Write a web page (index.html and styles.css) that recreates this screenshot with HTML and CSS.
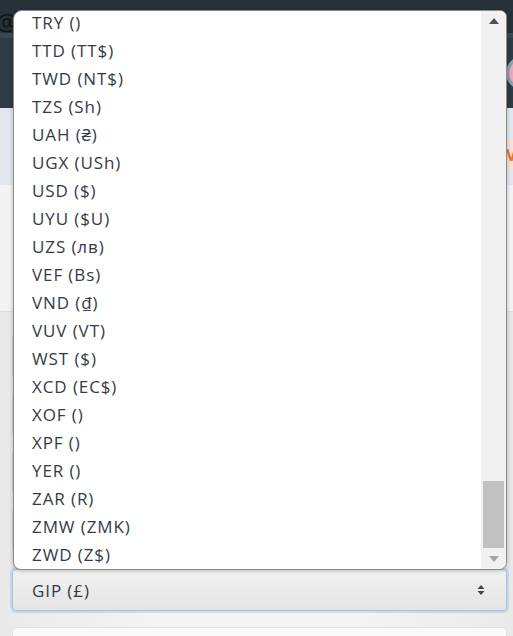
FILE: index.html
```html
<!DOCTYPE html>
<html>
<head>
<meta charset="utf-8">
<link rel="stylesheet" href="styles.css">
</head>
<body>
<div class="page">
  <header class="topbar"><span class="at">@</span></header>
  <div class="subnav"><span class="avatar"></span></div>
  <div class="hero"><span class="hero-btn">V</span></div>
  <div class="band"></div>
  <div class="form">
    <div class="field"></div>
    <div class="field"></div>
    <div class="field"></div>
    <div class="field"></div>
    <div class="select-box">
      <span>GIP (£)</span>
      <svg class="updown" width="8" height="12" viewBox="0 0 8 12"><path d="M4 1 L7.5 5 H0.5 Z M4 11 L7.5 7 H0.5 Z" fill="#3c4650"/></svg>
    </div>
    <div class="field next"></div>
  </div>

  <div class="dropdown">
    <ul class="options">
      <li>TRY ()</li>
      <li>TTD (TT$)</li>
      <li>TWD (NT$)</li>
      <li>TZS (Sh)</li>
      <li>UAH (₴)</li>
      <li>UGX (USh)</li>
      <li>USD ($)</li>
      <li>UYU ($U)</li>
      <li>UZS (лв)</li>
      <li>VEF (Bs)</li>
      <li>VND (₫)</li>
      <li>VUV (VT)</li>
      <li>WST ($)</li>
      <li>XCD (EC$)</li>
      <li>XOF ()</li>
      <li>XPF ()</li>
      <li>YER ()</li>
      <li>ZAR (R)</li>
      <li>ZMW (ZMK)</li>
      <li>ZWD (Z$)</li>
    </ul>
    <div class="scrollbar">
      <svg class="arrow" width="10" height="6" viewBox="0 0 10 6"><path d="M5 0 L10 6 H0 Z" fill="#505050"/></svg>
      <div class="track"><div class="thumb"></div></div>
      <svg class="arrow" width="10" height="6" viewBox="0 0 10 6"><path d="M0 0 H10 L5 6 Z" fill="#a3a3a3"/></svg>
    </div>
  </div>
</div>
</body>
</html>
```

FILE: styles.css
```css
* { box-sizing: border-box; }
html, body { margin: 0; padding: 0; }
body {
  width: 513px;
  height: 636px;
  overflow: hidden;
  font-family: "Open Sans", "Noto Sans", sans-serif;
  background: #eeeeee;
}
.page { position: relative; width: 513px; height: 636px; overflow: hidden; }

.topbar {
  height: 38px;
  background: #263238;
  border-bottom: 5px solid #3a4a52;
  display: flex;
  align-items: center;
}
.at {
  color: #111;
  font-size: 24px;
  margin-left: -4px;
  margin-top: 10px;
}
.subnav {
  height: 75px;
  margin-top: -5px;
  background: #2e3b42;
  border-top: 5px solid #3a4a52;
  display: flex;
  justify-content: flex-end;
  align-items: center;
}
.avatar {
  width: 34px;
  height: 34px;
  border-radius: 50%;
  background: #e9a6bd;
  border: 3px solid #8aa1b3;
  margin-right: -27px;
  box-shadow: inset 0 0 0 7px #e9a6bd, inset 0 0 0 20px #4b5257;
}
.hero {
  height: 77px;
  background: #e2e7ef;
  display: flex;
  justify-content: flex-end;
  align-items: center;
}
.hero-btn {
  width: 20px;
  height: 30px;
  background: #f6e2d6;
  color: #e9742b;
  font-weight: 700;
  font-size: 16px;
  line-height: 30px;
  margin-right: -13px;
  margin-top: 16px;
}
.band {
  height: 127px;
  background: #f3f3f3;
  border-bottom: 1px solid #d6dbe1;
}
.form {
  padding: 22px 6px 0 12px;
  display: flex;
  flex-direction: column;
  gap: 14px;
  background: linear-gradient(90deg, #e9e9e9, #f4f4f4 30%, #f4f4f4 70%, #e9e9e9);
  height: 400px;
}
.field {
  height: 44px;
  border: 1px solid #cdd3da;
  border-radius: 4px;
  background: #f7f7f7;
  flex-shrink: 0;
}
.select-box {
  flex-shrink: 0;
  height: 42px;
  margin-top: 3px;
  border: 1px solid #a6c1e8;
  border-radius: 4px;
  background: linear-gradient(180deg, #f2f2f2, #e4e4e4);
  box-shadow: 0 0 0 2px rgba(140, 175, 230, 0.35);
  display: flex;
  align-items: center;
  justify-content: space-between;
  padding: 0 21px 0 19px;
  font-size: 17px;
  letter-spacing: 0.9px;
  color: #333a45;
}
.field.next { margin-top: 2px; background: #f9f9f9; border-color: #dde2e8; }

.dropdown {
  position: absolute;
  left: 13px;
  top: 10px;
  width: 494px;
  height: 560px;
  background: #ffffff;
  border: 1px solid #8c8c8c;
  border-radius: 9px 7px 8px 8px;
  box-shadow: 0 1px 4px rgba(0, 0, 0, 0.25);
  overflow: hidden;
  display: flex;
}
.options {
  list-style: none;
  margin: -2px 0 0 0;
  padding: 0;
  flex: 1;
}
.options li {
  height: 28px;
  line-height: 28px;
  padding-left: 18px;
  font-size: 17px;
  letter-spacing: 0.9px;
  color: #343b47;
  white-space: nowrap;
}
.scrollbar {
  width: 25px;
  background: #f1f1f1;
  display: flex;
  flex-direction: column;
  align-items: center;
}
.scrollbar .arrow { margin: 7px 0; flex-shrink: 0; }
.track { flex: 1; width: 100%; display: flex; flex-direction: column; justify-content: flex-end; padding: 0 2px; }
.thumb {
  height: 67px;
  background: #c1c1c1;
  margin-bottom: 1px;
}
```
